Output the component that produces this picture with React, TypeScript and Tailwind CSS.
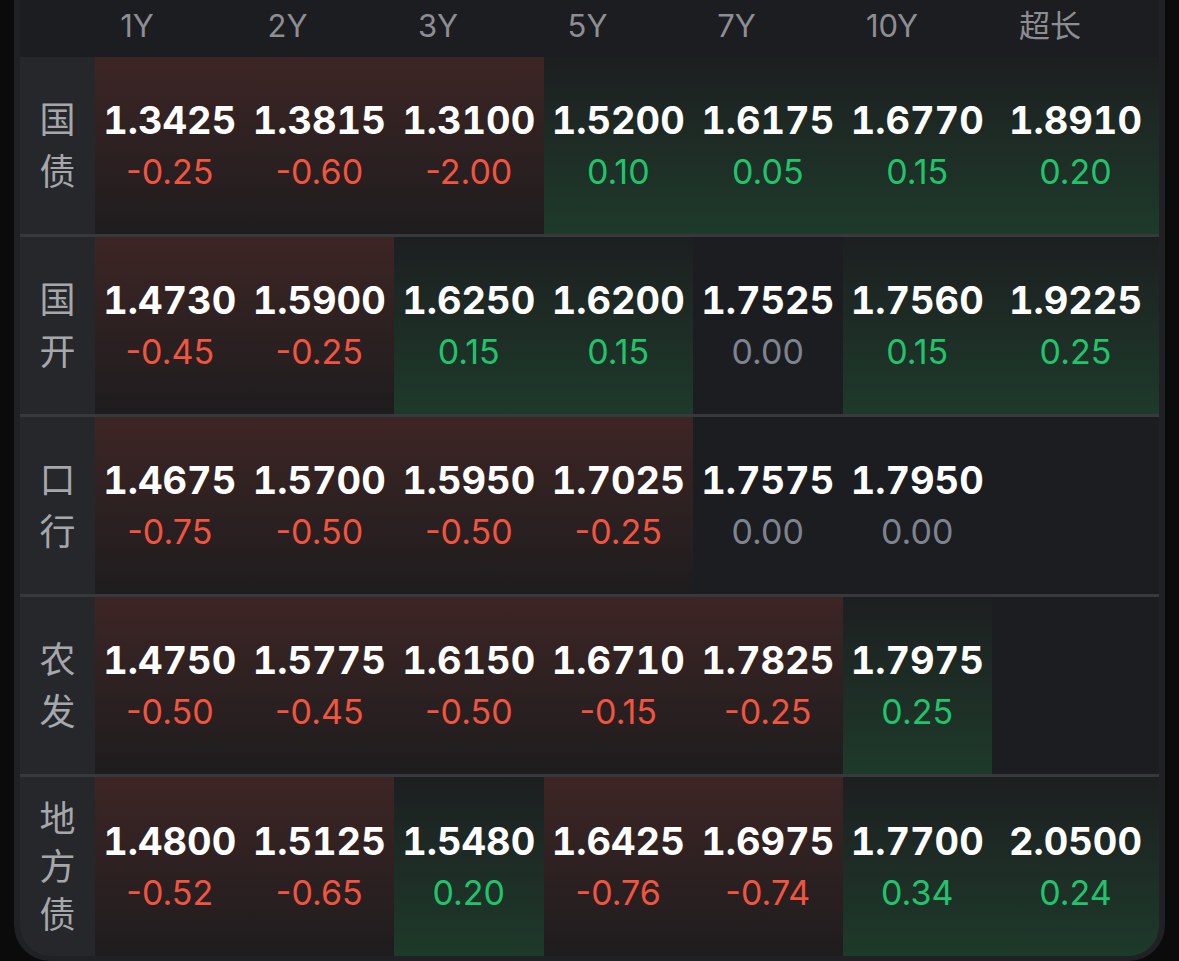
import React from "react";

type Cell = { v: string; d: string } | null;

const cols = ["1Y", "2Y", "3Y", "5Y", "7Y", "10Y", "超长"];
// header labels sit a little left of the data columns
const headWidths = ["w-[150px]", "w-[151px]", "w-[150px]", "w-[149px]", "w-[149px]", "w-[162px]", "w-[154px]"];

const rows: { name: string[]; cells: Cell[] }[] = [
  {
    name: ["国", "债"],
    cells: [
      { v: "1.3425", d: "-0.25" },
      { v: "1.3815", d: "-0.60" },
      { v: "1.3100", d: "-2.00" },
      { v: "1.5200", d: "0.10" },
      { v: "1.6175", d: "0.05" },
      { v: "1.6770", d: "0.15" },
      { v: "1.8910", d: "0.20" },
    ],
  },
  {
    name: ["国", "开"],
    cells: [
      { v: "1.4730", d: "-0.45" },
      { v: "1.5900", d: "-0.25" },
      { v: "1.6250", d: "0.15" },
      { v: "1.6200", d: "0.15" },
      { v: "1.7525", d: "0.00" },
      { v: "1.7560", d: "0.15" },
      { v: "1.9225", d: "0.25" },
    ],
  },
  {
    name: ["口", "行"],
    cells: [
      { v: "1.4675", d: "-0.75" },
      { v: "1.5700", d: "-0.50" },
      { v: "1.5950", d: "-0.50" },
      { v: "1.7025", d: "-0.25" },
      { v: "1.7575", d: "0.00" },
      { v: "1.7950", d: "0.00" },
      null,
    ],
  },
  {
    name: ["农", "发"],
    cells: [
      { v: "1.4750", d: "-0.50" },
      { v: "1.5775", d: "-0.45" },
      { v: "1.6150", d: "-0.50" },
      { v: "1.6710", d: "-0.15" },
      { v: "1.7825", d: "-0.25" },
      { v: "1.7975", d: "0.25" },
      null,
    ],
  },
  {
    name: ["地", "方", "债"],
    cells: [
      { v: "1.4800", d: "-0.52" },
      { v: "1.5125", d: "-0.65" },
      { v: "1.5480", d: "0.20" },
      { v: "1.6425", d: "-0.76" },
      { v: "1.6975", d: "-0.74" },
      { v: "1.7700", d: "0.34" },
      { v: "2.0500", d: "0.24" },
    ],
  },
];

const font = { fontFamily: "Inter, 'Noto Sans CJK SC', sans-serif" };

const RateCell = ({ cell, last }: { cell: Cell; last: boolean }) => {
  const w = last ? "w-[167px]" : "w-[149.5px]";
  if (!cell) return <div className={`${w} h-full bg-[#1c1d20]`} />;
  const down = cell.d.startsWith("-");
  const up = !down && cell.d !== "0.00";
  const bg = down
    ? "bg-gradient-to-b from-[#3d2524] to-[#1e1c1e]"
    : up
    ? "bg-gradient-to-b from-[#1c1f20] to-[#1d3a2a]"
    : "bg-[#1c1d20]";
  const color = down ? "text-[#f2543f]" : up ? "text-[#1fc46c]" : "text-[#7d8490]";
  return (
    <div className={`${w} h-full ${bg} flex flex-col items-center justify-center`}>
      <div className="text-[38px] font-bold text-white leading-[52px] tabular-nums">{cell.v}</div>
      <div className={`text-[34px] leading-[52px] ${color}`}>{cell.d}</div>
    </div>
  );
};

export default function App() {
  return (
    <div className="w-[1179px] h-[961px] bg-[#0b0b0c] overflow-hidden" style={font}>
      <div className="ml-[14px] w-[1151px] h-[961px] bg-[#202124] rounded-b-[36px] px-[6px] pb-[5px]">
        <div className="w-[1139px] h-[956px] rounded-b-[30px] overflow-hidden bg-[#1c1d20] flex flex-col">
          <div className="h-[57px] flex items-center text-[31px] text-[#8d8e93] pb-[4px] shrink-0">
            <div className="w-[42px]" />
            {cols.map((c, i) => (
              <div key={c} className={`${headWidths[i]} text-center`}>
                {c}
              </div>
            ))}
          </div>
          {rows.map((r, ri) => (
            <div
              key={ri}
              className={`flex shrink-0 ${ri === 4 ? "h-[180px]" : "h-[180px] border-b-[3px] border-[#38393c]"}`}
            >
              <div className="w-[75px] h-full bg-[#25272b] flex flex-col items-center justify-center text-[#a6a7ab] text-[36px]">
                {r.name.map((n, ni) => (
                  <div key={ni} className={r.name.length > 2 ? "leading-[48px]" : "leading-[52px]"}>
                    {n}
                  </div>
                ))}
              </div>
              {r.cells.map((c, ci) => (
                <RateCell key={ci} cell={c} last={ci === 6} />
              ))}
            </div>
          ))}
        </div>
      </div>
    </div>
  );
}
